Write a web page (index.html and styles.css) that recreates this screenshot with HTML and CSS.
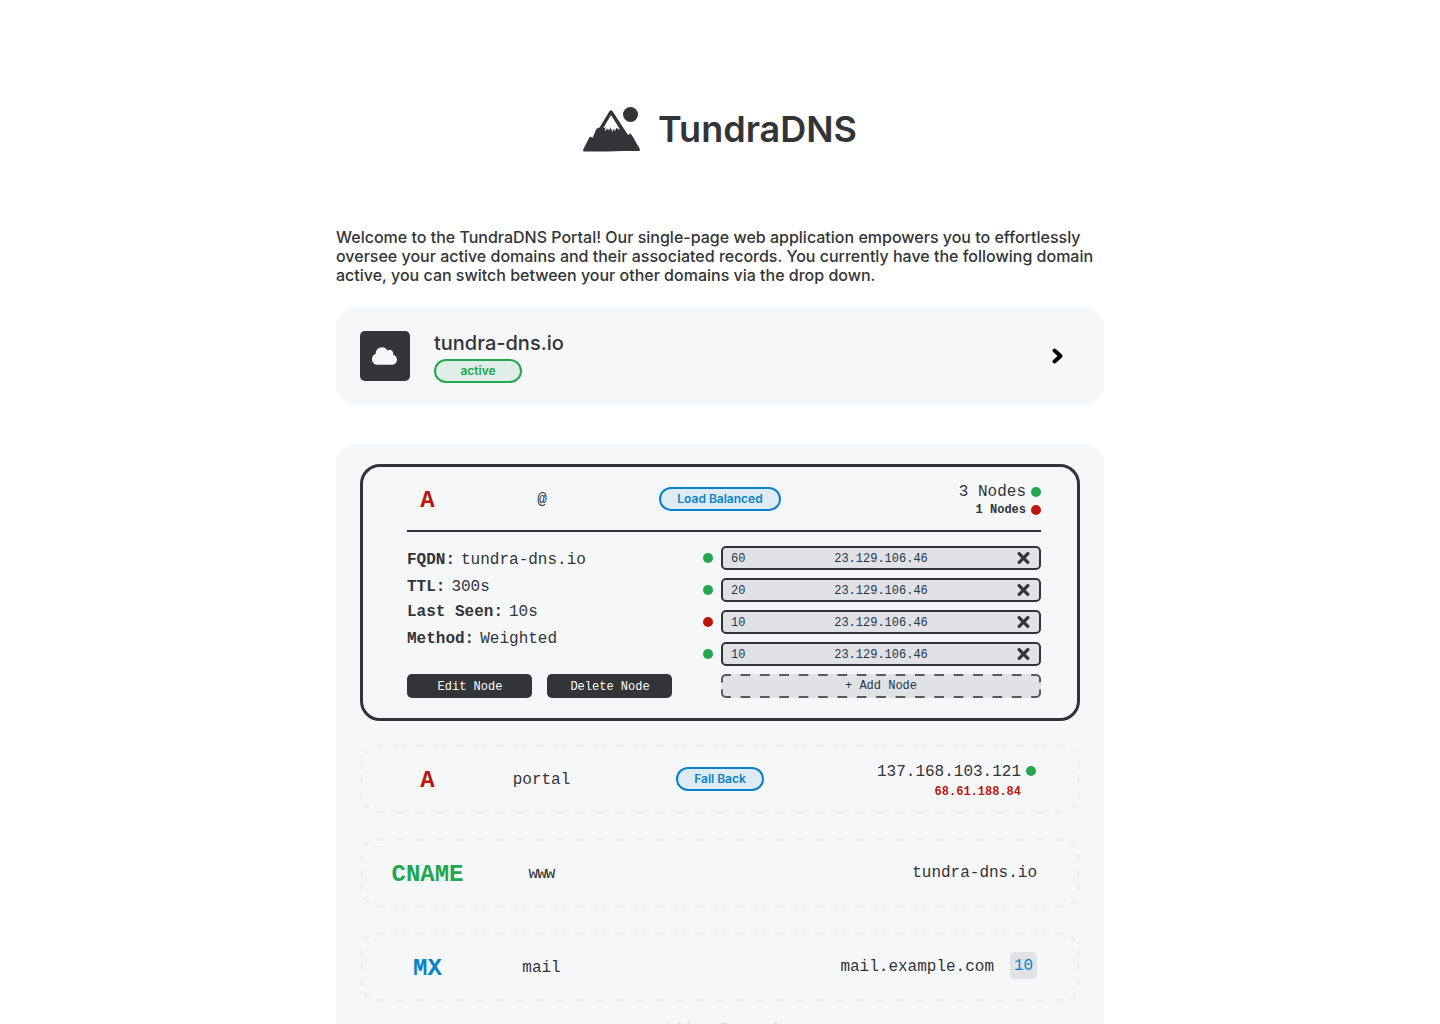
FILE: index.html
```html
<!DOCTYPE html>
<html lang="en">
<head>
<meta charset="utf-8">
<title>TundraDNS</title>
<link rel="stylesheet" href="styles.css">
</head>
<body>
<svg class="defs" aria-hidden="true">
  <symbol id="dashes" viewBox="0 0 720 70">
    <g fill="none" stroke="#eff0f2" stroke-width="3">
      <path d="M20 1.5H700M20 68.5H700" stroke-dasharray="10 10" stroke-dashoffset="5"/>
      <path d="M1.5 20V50M718.5 20V50" stroke-dasharray="7.5 7.5" stroke-dashoffset="3.75"/>
      <path d="M1.5 20A18.5 18.5 0 0 1 20 1.5M700 1.5A18.5 18.5 0 0 1 718.5 20M718.5 50A18.5 18.5 0 0 1 700 68.5M20 68.5A18.5 18.5 0 0 1 1.5 50" stroke-dasharray="7.26 7.26" stroke-dashoffset="3.63"/>
    </g>
  </symbol>
  <symbol id="cross" viewBox="0 0 12 12">
    <path d="M2 1.500L10 9.500M10 1.500L2 9.500" stroke="#333437" stroke-width="3" stroke-linecap="round"/>
  </symbol>
</svg>
<div class="page">
  <header class="brand">
    <svg class="logo" viewBox="0 0 57 45" width="57" height="45">
      <g fill="#333437">
        <path d="M0 43L6.500 30L8 29.800L9.500 31L13.500 21.800L16.500 20.500L26.300 4.500Q28 2 29.700 4.500L45 28L47.500 26.500L50 30L57 42.500L56.500 44H40L25 44.500H0.500Z"/>
        <circle cx="47.500" cy="7.500" r="7.500"/>
      </g>
      <path fill="#fff" d="M28 8L20.200 21.300L22.600 20.300L22 24L25 21.400L26 23.400L27.600 20.600L29.400 25L30.600 21.600L32.200 24.400L33 20.800L36.800 23L35.800 20.500Z"/>
    </svg>
    <h1>TundraDNS</h1>
  </header>
  <p class="intro">Welcome to the TundraDNS Portal! Our single-page web application empowers you to effortlessly oversee your active domains and their associated records. You currently have the following domain active, you can switch between your other domains via the drop down.</p>

  <section class="domain">
    <div class="domain-icon">
      <svg viewBox="0 0 640 512" width="25" height="20"><path fill="#f6f7f9" d="M0 336c0 79.500 64.500 144 144 144H512c70.700 0 128-57.300 128-128c0-61.900-44-113.600-102.400-125.400c4.100-10.700 6.400-22.400 6.400-34.600c0-53-43-96-96-96c-19.700 0-38.100 6-53.300 16.200C367 64.200 315.300 32 256 32C167.600 32 96 103.600 96 192c0 2.700 .1 5.400 .2 8.100C40.200 219.800 0 273.200 0 336z"/></svg>
    </div>
    <div class="domain-info">
      <div class="domain-name">tundra-dns.io</div>
      <div class="tag active">active</div>
    </div>
    <svg class="chevron" viewBox="0 0 12 16" width="12" height="16"><path d="M2.500 2.500L8.500 8L2.500 13.500" fill="none" stroke="#000" stroke-width="4" stroke-linecap="round" stroke-linejoin="round"/></svg>
  </section>

  <main class="records">
    <section class="panel">
      <div class="panel-head">
        <div class="type red">A</div>
        <div class="name">@</div>
        <div class="mid"><span class="tag load">Load Balanced</span></div>
        <div class="counts">
          <div class="count">3 Nodes<i class="dot green-dot"></i></div>
          <div class="count small">1 Nodes<i class="dot red-dot"></i></div>
        </div>
      </div>
      <div class="panel-body">
        <div class="details">
          <dl>
            <div><dt>FQDN:</dt><dd>tundra-dns.io</dd></div>
            <div><dt>TTL:</dt><dd>300s</dd></div>
            <div class="seen"><dt>Last Seen:</dt><dd>10s</dd></div>
            <div class="method"><dt>Method:</dt><dd>Weighted</dd></div>
          </dl>
          <div class="actions"><button>Edit Node</button><button>Delete Node</button></div>
        </div>
        <div class="nodes">
          <div class="node"><i class="dot green-dot"></i><div class="field"><span>60</span><span>23.129.106.46</span><svg width="13" height="13"><use href="#cross"/></svg></div></div>
          <div class="node"><i class="dot green-dot"></i><div class="field"><span>20</span><span>23.129.106.46</span><svg width="13" height="13"><use href="#cross"/></svg></div></div>
          <div class="node"><i class="dot red-dot"></i><div class="field"><span>10</span><span>23.129.106.46</span><svg width="13" height="13"><use href="#cross"/></svg></div></div>
          <div class="node"><i class="dot green-dot"></i><div class="field"><span>10</span><span>23.129.106.46</span><svg width="13" height="13"><use href="#cross"/></svg></div></div>
          <div class="add">
            <svg class="outline" viewBox="0 0 320 24" width="320" height="24">
              <g fill="none" stroke="#59595c" stroke-width="2">
                <path d="M5 1H315M5 23H315" stroke-dasharray="9.690 9.690" stroke-dashoffset="4.840"/>
                <path d="M1 5V19M319 5V19" stroke-dasharray="7 7" stroke-dashoffset="3.500"/>
                <path d="M1 5A4 4 0 0 1 5 1M315 1A4 4 0 0 1 319 5M319 19A4 4 0 0 1 315 23M5 23A4 4 0 0 1 1 19"/>
              </g>
            </svg>
            <span>+ Add Node</span>
          </div>
        </div>
      </div>
    </section>

    <section class="row">
      <svg class="outline" width="720" height="70"><use href="#dashes"/></svg>
      <div class="type red">A</div>
      <div class="name">portal</div>
      <div class="mid"><span class="tag fall">Fall Back</span></div>
      <div class="value pair">
        <div class="count"><span>137.168.103.121</span><i class="dot green-dot"></i></div>
        <div class="backup">68.61.188.84</div>
      </div>
    </section>
    <section class="row">
      <svg class="outline" width="720" height="70"><use href="#dashes"/></svg>
      <div class="type green">CNAME</div>
      <div class="name www">www</div>
      <div class="mid"></div>
      <div class="value">tundra-dns.io</div>
    </section>
    <section class="row">
      <svg class="outline" width="720" height="70"><use href="#dashes"/></svg>
      <div class="type blue">MX</div>
      <div class="name">mail</div>
      <div class="mid"></div>
      <div class="value">mail.example.com<span class="priority">10</span></div>
    </section>
    <div class="new-record">Add a Record</div>
  </main>
</div>
</body>
</html>
```
FILE: styles.css
```css
* { box-sizing: border-box; }

body {
  margin: 0;
  height: 1024px;
  overflow: hidden;
  background: #fff;
  color: #333437;
  font-family: Inter, sans-serif;
}

.defs { display: none; }

.page { width: 768px; margin: 0 auto; }

.brand {
  display: flex;
  justify-content: center;
  align-items: center;
  gap: 18px;
  height: 228px;
  padding-top: 30px;
}

.brand h1 {
  margin: 0;
  font-size: 36px;
  line-height: 46px;
  font-weight: 600;
}

.intro {
  margin: 0;
  font-size: 16px;
  line-height: 19px;
  font-weight: 500;
}

.domain {
  display: flex;
  align-items: center;
  height: 98px;
  margin-top: 22px;
  padding: 0 40px 0 24px;
  border-radius: 20px;
  background: #f6f7f9;
}

.domain-icon {
  display: flex;
  align-items: center;
  justify-content: center;
  width: 50px;
  height: 50px;
  padding-right: 1px;
  border-radius: 5px;
  background: #333437;
}

.domain-info { margin-left: 24px; padding-top: 2px; }

.domain-name {
  height: 28px;
  font-size: 20px;
  line-height: 24px;
  font-weight: 500;
}

.chevron { margin-left: auto; }

.tag {
  display: block;
  height: 24px;
  border: 2px solid #0782ca;
  border-radius: 12px;
  background: #deebf4;
  color: #0782ca;
  font-family: Inter, sans-serif;
  font-size: 12px;
  line-height: 20px;
  font-weight: 600;
  text-align: center;
}

.active, .fall { width: 88px; }
.active { border-color: #22a74e; background: #e1eee8; color: #22a74e; }
.load { width: 122px; }

.records {
  display: flex;
  flex-direction: column;
  gap: 24px;
  margin-top: 39px;
  padding: 20px 24px;
  border-radius: 20px;
  background: #f6f7f9;
  font-family: "Liberation Mono", monospace;
  font-size: 16px;
}

.panel {
  height: 257px;
  margin-bottom: -1px;
  padding: 0 36px 0 44px;
  border: 3px solid #333437;
  border-radius: 20px;
}

.panel-head {
  display: grid;
  grid-template-columns: 41px 187px 170px 236px;
  align-items: center;
  height: 65px;
  border-bottom: 2px solid #333437;
}

.type {
  padding-top: 4px;
  font-size: 24px;
  line-height: 28px;
  font-weight: 700;
  text-align: center;
}

.name { padding-top: 1px; text-align: center; }
.panel-head .name { padding: 2px 0 0 1px; }
.www { letter-spacing: -1px; }
.mid { display: flex; justify-content: center; }

.red { color: #bb170b; }
.green { color: #22a74e; }
.blue { color: #0782ca; }

.dot {
  flex: none;
  display: block;
  width: 10px;
  height: 10px;
  border-radius: 50%;
}
.green-dot { background: #22a74e; }
.red-dot { background: #bb170b; }

.counts { padding-top: 4px; }
.count {
  display: flex;
  justify-content: flex-end;
  align-items: center;
  gap: 5px;
  height: 18px;
}
.small { font-size: 12px; font-weight: 700; }

.panel-body {
  display: flex;
  justify-content: space-between;
  padding-top: 14px;
}

.details { width: 265px; }
dl { height: 128px; margin: 0; }
dl div { display: flex; gap: 6px; height: 27px; line-height: 28px; }
dl .seen { height: 26px; line-height: 25px; }
dl .method { line-height: 26px; }
dt { font-weight: 700; }
dd { margin: 0; }

.actions { display: flex; gap: 15px; }
button {
  width: 125px;
  height: 24px;
  padding: 1px 0 0 1px;
  border: 0;
  border-radius: 5px;
  background: #333437;
  color: #fff;
  font: 12px "Liberation Mono", monospace;
}

.nodes {
  display: flex;
  flex-direction: column;
  gap: 8px;
  width: 338px;
  font-size: 12px;
  color: #24364b;
}
.node { display: flex; align-items: center; gap: 8px; }

.field {
  display: grid;
  grid-template-columns: 60px 1fr 60px;
  align-items: center;
  width: 320px;
  height: 24px;
  padding: 0 9px 0 8px;
  border: 2px solid #333437;
  border-radius: 5px;
  background: #e1e2e6;
}
.field span { padding-top: 1px; }
.field span:nth-child(2) { text-align: center; padding-left: 1px; }
.field svg { justify-self: end; }

.add {
  position: relative;
  align-self: flex-end;
  width: 320px;
  height: 24px;
  border-radius: 5px;
  background: #e1e2e6;
  line-height: 25px;
  text-align: center;
}

.outline { position: absolute; left: 0; top: 0; }

.row {
  position: relative;
  display: grid;
  grid-template-columns: 115px 113px 244px 195px;
  align-items: center;
  height: 70px;
  padding-left: 10px;
}

.value {
  display: flex;
  justify-content: flex-end;
  align-items: center;
}
.pair { flex-direction: column; align-items: flex-end; padding: 4px 1px 0 0; }
.pair .count { height: 20px; }
.pair .count span { padding-top: 2px; }
.backup {
  padding-right: 15px;
  color: #bb170b;
  font-size: 12px;
  line-height: 22px;
  height: 20px;
  font-weight: 700;
}

.priority {
  flex: none;
  width: 27px;
  height: 27px;
  margin: -3px 0 0 16px;
  border-radius: 5px;
  background: #e1e2e6;
  color: #0782ca;
  line-height: 29px;
  text-align: center;
}

.new-record {
  margin-top: -8px;
  color: #d9dadd;
  line-height: 24px;
  text-align: center;
}
```
